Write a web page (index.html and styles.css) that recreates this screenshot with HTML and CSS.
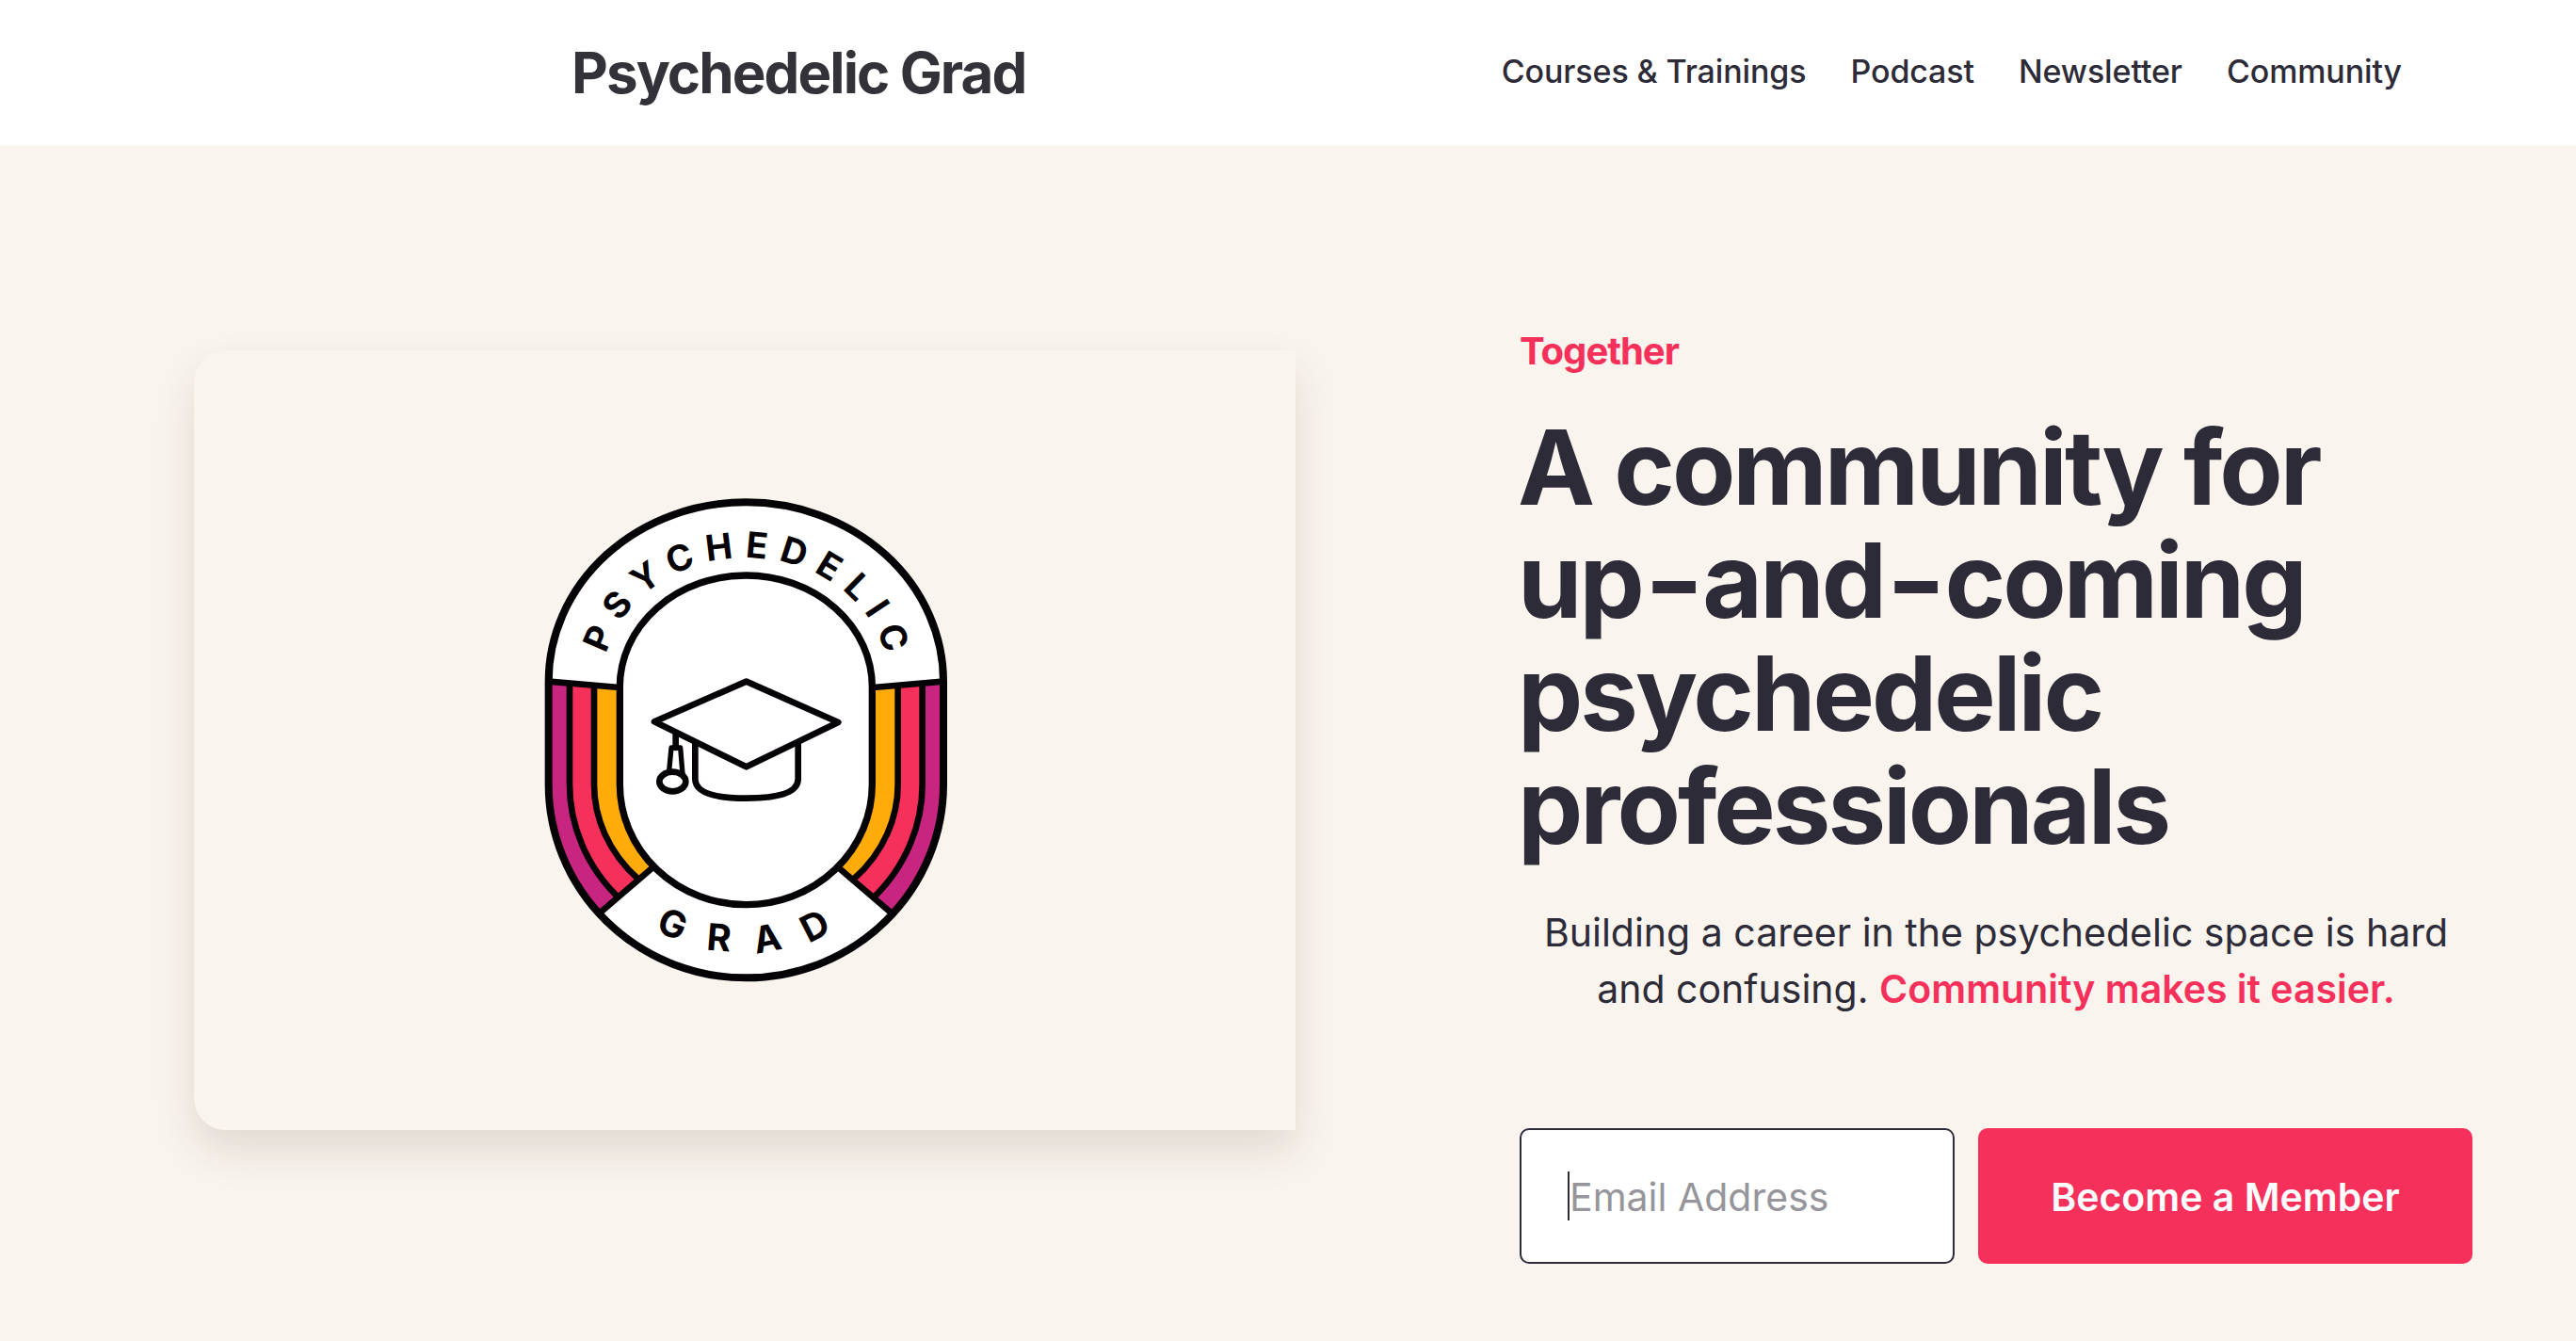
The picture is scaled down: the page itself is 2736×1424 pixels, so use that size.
FILE: index.html
```html
<!DOCTYPE html>
<html lang="en">
<head>
    <meta charset="UTF-8">
    <meta name="viewport" content="width=device-width, initial-scale=1.0">
    <title>Psychedelic Grad</title>
    <link rel="stylesheet" href="styles.css">
</head>
<body>
    <header class="site-header">
        <a class="brand" href="#">Psychedelic Grad</a>
        <nav class="main-nav">
            <a href="#">Courses &amp; Trainings</a>
            <a href="#">Podcast</a>
            <a href="#">Newsletter</a>
            <a href="#">Community</a>
        </nav>
    </header>

    <main class="hero">
        <div class="logo-card">
            <svg class="badge" viewBox="0 0 1500 1740" aria-label="Psychedelic Grad badge">
                <defs>
                    <path id="outer" d="M125 671 A629 571 0 0 1 1383 671 V999 A629 616 0 0 1 125 999 Z"/>
                    <clipPath id="outer-clip"><use href="#outer"/></clipPath>
                    <path id="top-arc" d="M299 671 A455 394 0 0 1 1209 671"/>
                    <path id="bottom-arc" d="M181 999 A573 535 0 0 0 1327 999"/>
                </defs>

                <use href="#outer" fill="#c72580"/>
                <g clip-path="url(#outer-clip)" stroke="#050305" stroke-width="20">
                    <path d="M192 560 V999 A562 522 0 0 0 1316 999 V560 Z" fill="#f4305b"/>
                    <path d="M270 560 V999 A484 428 0 0 0 1238 999 V560 Z" fill="#ffab09"/>
                    <path d="M0 0 H1500 V660 L1160 690 H350 L0 660 Z" fill="#fff" stroke="none"/>
                    <path d="M280 1415 L455 1265 H1050 L1225 1415 V1800 H280 Z" fill="#fff" stroke="none"/>
                    <path d="M125 671 L350 690 M1160 690 L1383 671 M280 1415 L455 1265 M1050 1265 L1225 1415" fill="none"/>
                </g>
                <path d="M352 688 A402 355 0 0 1 1156 688 V999 A402 383 0 0 1 352 999 Z" fill="#fff" stroke="#050305" stroke-width="22"/>
                <use href="#outer" fill="none" stroke="#050305" stroke-width="24"/>

                <text class="badge-text"><textPath href="#top-arc" startOffset="51.3%" text-anchor="middle">PSYCHEDELIC</textPath></text>
                <text class="badge-text badge-text-wide"><textPath href="#bottom-arc" startOffset="52%" text-anchor="middle">GRAD</textPath></text>

                <g fill="#fff" stroke="#050305" stroke-width="20" stroke-linejoin="round" stroke-linecap="round">
                    <path d="M592 866 V982 Q592 1043 755 1043 Q920 1043 920 982 V866"/>
                    <path d="M755 671 L1048 801 L755 943 L462 799 Z"/>
                    <path d="M530 838 V882" fill="none"/>
                    <path d="M516 882 H545 L552 965 H508 Z" fill="none" stroke-width="16"/>
                    <ellipse cx="520" cy="990" rx="42" ry="31"/>
                </g>
            </svg>
        </div>

        <section class="pitch">
            <p class="eyebrow">Together</p>
            <h1>A community for up<span class="hyphen">-</span>and<span class="hyphen">-</span>coming psychedelic professionals</h1>
            <p class="lead">Building a career in the psychedelic space is hard and confusing. <strong>Community makes it easier.</strong></p>
            <form class="signup">
                <div class="email-field">
                    <span class="caret"></span>
                    <input type="email" placeholder="Email Address">
                </div>
                <button type="button">Become a Member</button>
            </form>
        </section>
    </main>
</body>
</html>
```

FILE: styles.css
```css
* {
    margin: 0;
    padding: 0;
    box-sizing: border-box;
}

html, body {
    height: 100%;
    overflow: hidden;
}

body {
    font-family: Inter, "Open Sans", sans-serif;
    background: #f9f4ee;
    color: #2d2b38;
}

a {
    color: inherit;
    text-decoration: none;
}

.site-header {
    height: 154px;
    display: flex;
    justify-content: space-between;
    align-items: center;
    padding: 0 185px 0 607px;
    background: #fff;
}

.brand {
    font-size: 60px;
    font-weight: 700;
    letter-spacing: -1.9px;
    color: #333238;
}

.main-nav {
    display: flex;
    gap: 47px;
    padding-bottom: 3px;
    font-size: 34px;
    font-weight: 500;
    letter-spacing: -0.12px;
}

.hero {
    display: flex;
    gap: 238px;
    padding-left: 206px;
}

.logo-card {
    width: 1170px;
    height: 828px;
    margin-top: 218px;
    padding-top: 8px;
    display: flex;
    justify-content: center;
    align-items: center;
    background: #f9f4ee;
    border-radius: 34px 0 0 34px;
    box-shadow: 0 22px 44px rgba(70, 50, 30, 0.13);
}

.badge {
    width: 500px;
    height: 580px;
}

.badge-text {
    font-size: 114px;
    font-weight: 700;
    letter-spacing: 36px;
    fill: #050305;
}

.badge-text-wide {
    font-size: 118px;
    letter-spacing: 82px;
}

.pitch {
    width: 1012px;
    padding-top: 194px;
}

.eyebrow {
    font-size: 40px;
    font-weight: 700;
    letter-spacing: -1px;
    line-height: 50px;
    color: #f4305b;
}

h1 {
    margin: 38px 0 0 -2px;
    width: 900px;
    font-size: 110px;
    font-weight: 700;
    line-height: 120px;
    letter-spacing: -3px;
}

.hyphen {
    display: inline-block;
    margin: 0 8px;
    transform: scaleX(1.25);
}

.lead {
    margin-top: 44px;
    font-size: 41px;
    line-height: 60px;
    text-align: center;
}

.lead strong {
    font-weight: 600;
    color: #f4305b;
}

.signup {
    display: flex;
    gap: 25px;
    margin-top: 118px;
    height: 144px;
}

.email-field {
    width: 462px;
    display: flex;
    align-items: center;
    padding-left: 49px;
    background: #fff;
    border: 2px solid #2d2b38;
    border-radius: 10px;
}

.caret {
    width: 2px;
    height: 52px;
    background: #2d2b38;
}

.email-field input {
    flex: 1;
    min-width: 0;
    padding-top: 2px;
    border: none;
    outline: none;
    background: transparent;
    font: 400 41px Inter, "Open Sans", sans-serif;
}

.email-field input::placeholder {
    color: #96959b;
}

.signup button {
    flex: 1;
    padding-top: 2px;
    border: none;
    border-radius: 10px;
    background: #f4305b;
    color: #fff;
    font: 600 41px Inter, "Open Sans", sans-serif;
}
```
